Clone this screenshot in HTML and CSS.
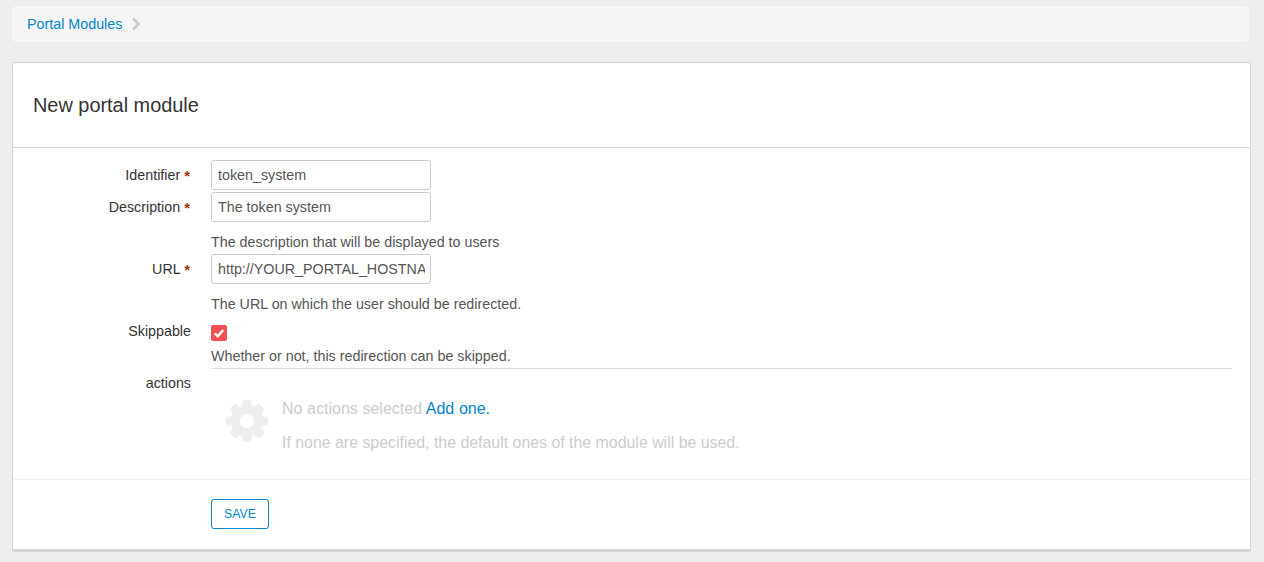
FILE: index.html
```html
<!DOCTYPE html>
<html lang="en">
<head>
<meta charset="utf-8">
<title>New portal module</title>
<link rel="stylesheet" href="styles.css">
</head>
<body>
<nav class="crumbs">
  <a href="#" class="link">Portal Modules</a>
  <svg class="chev" width="10" height="14" viewBox="0 0 10 14"><path d="M2 1.500 7.500 7 2 12.500" fill="none" stroke="#ccc" stroke-width="2.800"/></svg>
</nav>
<main class="card">
  <header class="card-head"><h1 class="title">New portal module</h1></header>
  <form class="form">
    <div class="row row-first">
      <label class="label">Identifier <span class="req">*</span></label>
      <div class="field"><input class="input" type="text" value="token_system"></div>
    </div>
    <div class="row">
      <label class="label">Description <span class="req">*</span></label>
      <div class="field">
        <input class="input" type="text" value="The token system">
        <p class="help help-input">The description that will be displayed to users</p>
      </div>
    </div>
    <div class="row row-url">
      <label class="label">URL <span class="req">*</span></label>
      <div class="field">
        <input class="input" type="text" value="http://YOUR_PORTAL_HOSTNAME/token">
        <p class="help help-input">The URL on which the user should be redirected.</p>
      </div>
    </div>
    <div class="row row-check">
      <label class="label label-check">Skippable</label>
      <div class="field field-rule">
        <span class="check"><svg width="16" height="16" viewBox="0 0 16 16"><path d="M3.800 8.400 6.800 11.300 12.200 5" fill="none" stroke="#fff" stroke-width="2.500"/></svg></span>
        <p class="help help-check">Whether or not, this redirection can be skipped.</p>
      </div>
    </div>
    <div class="row row-actions">
      <label class="label label-actions">actions</label>
      <div class="empty">
        <svg class="gear" width="42" height="42" viewBox="128 128 1536 1536"><path fill="#eee" d="M1152 896q0-106-75-181t-181-75-181 75-75 181 75 181 181 75 181-75 75-181zm512-109v222q0 12-8 23t-20 13l-185 28q-19 54-39 91 35 50 107 138 10 12 10 25t-9 23q-27 37-99 108t-94 71q-12 0-26-9l-138-108q-44 23-91 38-16 136-29 186-7 28-36 28h-222q-14 0-24.500-8.500t-11.500-21.500l-28-184q-49-16-90-37l-141 107q-10 9-25 9-14 0-25-11-126-114-165-168-7-10-7-23 0-12 8-23 15-21 51-66.500t54-70.500q-27-50-41-99l-183-27q-13-2-21-12.500t-8-23.500v-222q0-12 8-23t19-13l186-28q14-46 39-92-40-57-107-138-10-12-10-24 0-10 9-23 26-36 98.500-107.500t94.500-71.500q13 0 26 10l138 107q44-23 91-38 16-136 29-186 7-28 36-28h222q14 0 24.500 8.500t11.500 21.500l28 184q49 16 90 37l142-107q9-9 24-9 13 0 25 10 129 119 165 170 7 8 7 22 0 12-8 23-15 21-51 66.500t-54 70.500q26 50 41 98l183 28q13 2 21 12.500t8 23.500z"/></svg>
        <div class="empty-text">
          <p class="empty-line empty-lead">No actions selected <a href="#" class="link">Add one.</a></p>
          <p class="empty-line empty-note">If none are specified, the default ones of the module will be used.</p>
        </div>
      </div>
    </div>
    <div class="actions-bar"><button type="button" class="btn">SAVE</button></div>
  </form>
</main>
</body>
</html>
```
FILE: styles.css
```css
* { box-sizing: border-box; }
html, body { height: 100%; }
body {
  margin: 0;
  padding: 6px 13px 0 12px;
  background: #eee;
  color: #333;
  font: 14.3px/20px "Liberation Sans", Arial, sans-serif;
  overflow: hidden;
}
.link { color: #0286cd; text-decoration: none; }
.crumbs {
  display: flex;
  align-items: center;
  height: 36px;
  margin-right: 2px;
  padding-left: 15px;
  background: #f5f5f5;
  border-radius: 4px;
}
.chev { margin-left: 9px; }
.card {
  margin-top: 20px;
  background: #fff;
  border: 1px solid #d4d4d4;
  border-bottom-width: 3px;
  border-radius: 3px;
}
.card-head {
  height: 85px;
  display: flex;
  align-items: center;
  padding: 0 20px;
  border-bottom: 1px solid #d8d8d8;
}
.title { margin: 0; font-size: 19.9px; font-weight: 400; line-height: 24px; }
.form { display: block; }
.row { display: flex; padding-right: 18px; }
.row-first { margin-top: 12px; margin-bottom: 2px; }
.row-url { margin-top: 2px; }
.label {
  flex: 0 0 178px;
  text-align: right;
  line-height: 30px;
}
.req { color: #a8300c; font-weight: 700; font-size: 15px; line-height: 0; margin: 0 1px 0 0; vertical-align: -1px; }
.field { flex: 1; margin-left: 20px; min-width: 0; }
.input {
  display: block;
  width: 220px;
  height: 30px;
  padding: 0 5px 0 6px;
  border: 1px solid #ccc;
  border-radius: 3px;
  color: #555;
  font: 14.3px "Liberation Sans", Arial, sans-serif;
  background: #fff;
}
.help { margin: 0; color: #555; }
.help-input { padding-top: 10px; }
.row-check { margin-top: 10px; }
.label-check { line-height: 20px; margin-top: -3px; }
.check {
  display: block;
  width: 16px;
  height: 16px;
  margin-top: 1px;
  background: #f05050;
  border-radius: 2px;
}
.check svg { display: block; }
.help-check { margin-top: 5px; line-height: 20px; }
.field-rule { border-bottom: 1px solid #ddd; padding-bottom: 2px; }
.row-actions { margin-top: 4px; }
.label-actions { line-height: 20px; }
.empty { display: flex; margin: 27px 0 0 35px; }
.gear { flex: none; }
.empty-text { margin-left: 14px; }
.empty-line { margin: 0; font-size: 15.9px; line-height: 20px; color: #ccc; margin-top: -1px; }
.empty-lead { font-size: 16px; word-spacing: 0.2px; }
.empty-note { margin-top: 14px; }
.actions-bar {
  margin-top: 26px;
  padding: 19px 0 20px 198px;
  border-top: 1px solid #eee;
}
.btn {
  display: block;
  width: 58px;
  height: 30px;
  padding: 0;
  background: #fff;
  border: 1px solid #0286cd;
  border-radius: 3px;
  color: #0286cd;
  font: 12.3px "Liberation Sans", Arial, sans-serif;
}
```
